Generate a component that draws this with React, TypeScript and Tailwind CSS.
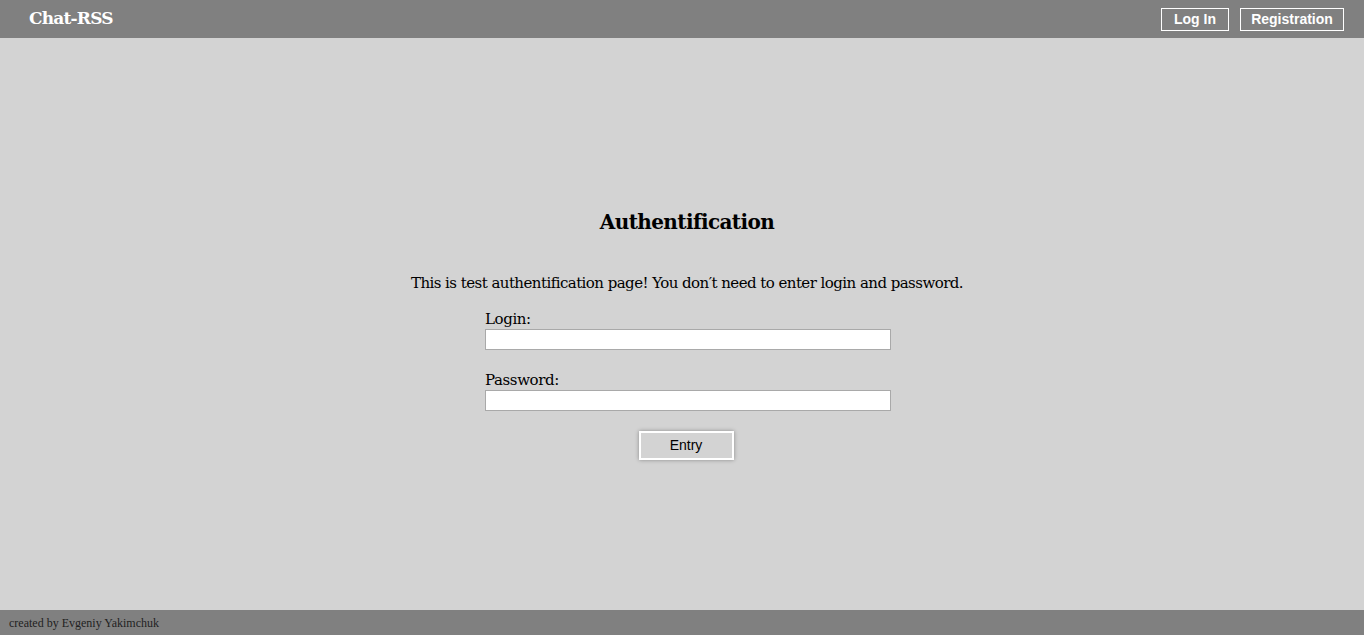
import React from "react";

export default function App() {
  return (
    <div className="flex h-[635px] w-full flex-col bg-[#d3d3d3]" style={{ fontFamily: '"Liberation Serif", serif' }}>
      <header className="flex h-[38px] shrink-0 items-center justify-between bg-[#808080] pl-[29px] pr-[20px]">
        <div className="font-['DejaVu_Serif',serif] text-[17px] font-bold tracking-[-0.8px] text-white">Chat-RSS</div>
        <div className="flex gap-[11px] font-['Liberation_Sans',Arial,sans-serif] text-[14px] font-bold text-white">
          <button className="h-[23px] w-[68px] border border-white">Log In</button>
          <button className="h-[23px] w-[104px] border border-white">Registration</button>
        </div>
      </header>
      <main className="flex flex-1 flex-col items-center pl-[10px] pt-[169px]">
        <h1 className="font-['DejaVu_Serif',serif] text-[20px] font-bold leading-[30px] tracking-[-0.6px] text-black">Authentification</h1>
        <p className="mt-[36px] font-['DejaVu_Serif',serif] text-[15px] leading-[20px] tracking-[-0.55px] text-black">
          This is test authentification page! You don′t need to enter login and password.
        </p>
        <div className="ml-[2px] mt-[17px] flex w-[406px] flex-col font-['DejaVu_Serif',serif] text-[15px] tracking-[-0.4px] text-black">
          <label className="leading-[19px]">Login:</label>
          <input className="h-[21px] border border-[#a9a9a9] bg-white" />
          <label className="mt-[21px] leading-[19px]">Password:</label>
          <input className="h-[21px] border border-[#a9a9a9] bg-white" />
        </div>
        <button className="mr-[2px] mt-[20px] h-[29px] w-[95px] border-2 border-white font-['Liberation_Sans',Arial,sans-serif] text-[14px] text-black shadow-[0_0_4px_rgba(0,0,0,0.35)]">
          Entry
        </button>
      </main>
      <footer className="flex h-[25px] shrink-0 items-center bg-[#808080] pl-[9px] font-['Liberation_Serif',serif] text-[12px] text-[#222]">
        created by Evgeniy Yakimchuk
      </footer>
    </div>
  );
}
